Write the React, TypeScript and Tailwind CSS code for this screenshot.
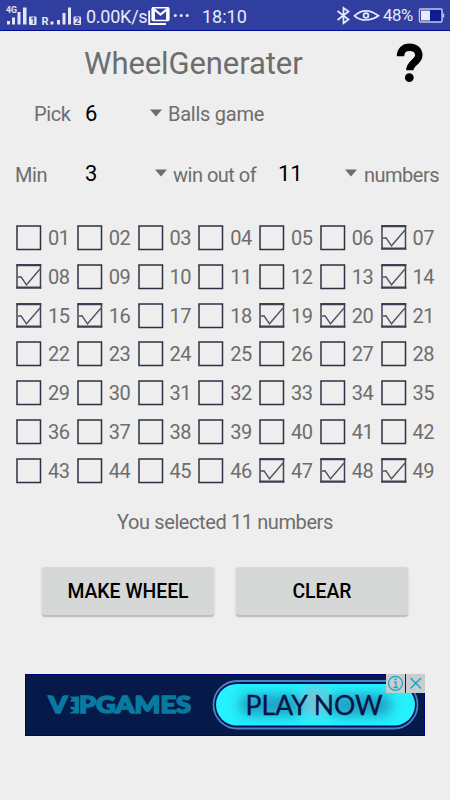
import { useState } from "react"

const NUMBERS = Array.from({ length: 49 }, (_, i) => i + 1)
const INITIAL = [7, 8, 14, 15, 16, 19, 20, 21, 47, 48, 49]

export default function App() {
  const [selected, setSelected] = useState<number[]>(INITIAL)

  const toggle = (n: number) => {
    setSelected((prev) => (prev.includes(n) ? prev.filter((x) => x !== n) : [...prev, n]))
  }

  return (
    <div className="flex h-[800px] w-[450px] flex-col overflow-hidden bg-[#eeeeee] font-['Roboto',sans-serif] text-[20px] tracking-[-0.4px] text-[#6d6d6d]">
      <StatusBar />

      <header className="flex h-[64px] items-center justify-between pl-[84px] pr-[26px]">
        <h1 className="text-[31px] leading-none tracking-[-0.1px]">WheelGenerater</h1>
        <HelpIcon />
      </header>

      <div className="flex h-[38px] items-center pl-[34px]">
        <span className="w-[51px]">Pick</span>
        <Spinner value="6" className="w-[77px]" />
        <span className="ml-[6px] tracking-[-0.25px]">Balls game</span>
      </div>

      <div className="mt-[22px] flex h-[38px] items-center pl-[15px]">
        <span className="mt-[1px] w-[70px]">Min</span>
        <Spinner value="3" className="w-[82px]" />
        <span className="ml-[6px] mt-[1px] w-[105px] tracking-[-0.5px]">win out of</span>
        <Spinner value="11" className="w-[79px]" />
        <span className="ml-[7px] mt-[1px] whitespace-nowrap tracking-[-0.5px]">numbers</span>
      </div>

      <div className="mt-[32px] grid auto-rows-[38.75px] grid-cols-[repeat(7,60.75px)] pl-[16px]">
        {NUMBERS.map((n) => (
          <NumberBox key={n} value={n} checked={selected.includes(n)} onToggle={() => toggle(n)} />
        ))}
      </div>

      <p className="mt-[12px] text-center leading-[28px]">You selected {selected.length} numbers</p>

      <div className="mt-[31px] flex gap-[22px] pl-[42px]">
        <ActionButton label="MAKE WHEEL" />
        <ActionButton label="CLEAR" onClick={() => setSelected([])} />
      </div>

      <AdBanner />
    </div>
  )
}

function StatusBar() {
  return (
    <div className="flex h-[31px] shrink-0 items-center border-b border-[#000c96] bg-[#303f9f] text-[18px] leading-none tracking-normal text-[#e8eaf8]">
      <svg width="86" height="30" viewBox="0 0 86 30" fill="#e4e6f6">
        <text x="6" y="13" fontSize="9.500" fontWeight="700" textLength="11" lengthAdjust="spacingAndGlyphs">4G</text>
        <path d="M7 21h3v3.500H7zM12 17.500h3v7h-3zM17.500 12h3v12.500h-3zM23 7.500h3.500v17H23z" />
        <rect x="29" y="16.500" width="7.500" height="8.500" rx="1" />
        <text x="30.500" y="24" fontSize="9" fontWeight="700" fill="#303f9f">1</text>
        <text x="41.500" y="24.500" fontSize="11" fontWeight="700">R</text>
        <path d="M50.500 21.500h3v3h-3zM57 20h3v4.500h-3zM62.500 13h3v11.500h-3zM68 7.500h3v17h-3z" />
        <rect x="73.500" y="16.500" width="7.500" height="8.500" rx="1" />
        <text x="74.700" y="24" fontSize="9" fontWeight="700" fill="#303f9f">2</text>
      </svg>
      <span className="mt-[3px] w-[62px] whitespace-nowrap text-[18px] tracking-[-0.25px]">0.00K/s</span>
      <svg width="43" height="30" viewBox="148 0 43 30" fill="none">
        <path d="M149.200 10.500V24H166" stroke="#fff" strokeWidth="1.800" />
        <rect x="152.200" y="7.800" width="16.600" height="12.700" rx="1" stroke="#fff" strokeWidth="1.600" />
        <path d="M153.800 20V9l6.700 5.500L167.200 9v11" stroke="#fff" strokeWidth="2.200" />
        <g fill="#e4e6f6">
          <circle cx="175.300" cy="15.500" r="1.500" />
          <circle cx="181.200" cy="15.500" r="1.500" />
          <circle cx="187.200" cy="15.500" r="1.500" />
        </g>
      </svg>
      <span className="ml-[11px] mt-[3px] w-[134px]">18:10</span>
      <svg width="45" height="30" viewBox="336 0 45 30" fill="none" stroke="#e8eaf8" strokeWidth="1.700">
        <path d="M337.500 11l11 8.500-5 3.700V8l5 3.500-11 8.500" />
        <path d="M354.500 15.800c4-3.800 7-5 11.500-5s8 1.600 12.500 5c-4.500 3-8 4.200-12.500 4.200s-8-1-11.500-4.200z" />
        <circle cx="366" cy="15.500" r="2.400" />
      </svg>
      <span className="ml-[2px] mt-[2px] w-[35px] text-[16.700px] tracking-[-0.4px]">48%</span>
      <svg width="27" height="30" viewBox="418 0 27 30">
        <rect x="419.500" y="9" width="22.500" height="13" rx="1" fill="#0c1c93" stroke="#c5c9e8" strokeWidth="1.500" />
        <rect x="421" y="10.500" width="9" height="10" fill="#e8eaf8" />
        <rect x="442.700" y="13.500" width="1.500" height="4" fill="#c5c9e8" />
      </svg>
    </div>
  )
}

function HelpIcon() {
  return (
    <svg width="28" height="40" viewBox="0 0 28 40" fill="none">
      <path d="M4.500 13.200C4.500 7.500 8 4.200 13.500 4.200s9.300 3.200 9.300 8.100c0 6.700-9 7.300-9 15" stroke="#000" strokeWidth="7.400" />
      <circle cx="13.300" cy="34.600" r="4.400" fill="#000" />
    </svg>
  )
}

function Spinner({ value, className }: { value: string; className: string }) {
  return (
    <button className={`flex items-center justify-between text-[22px] leading-none tracking-normal text-black ${className}`}>
      {value}
      <svg width="12" height="8" viewBox="0 0 12 8" className="-mt-[3px]">
        <path d="M0 .5h12l-6 7z" fill="#6d6d6d" />
      </svg>
    </button>
  )
}

function NumberBox({ value, checked, onToggle }: { value: number; checked: boolean; onToggle: () => void }) {
  return (
    <button onClick={onToggle} className="flex items-start gap-[6px]">
      <svg width="26" height="26" viewBox="0 0 26 26" fill="none" className="shrink-0">
        {checked ? (
          <>
            <path d="M1 .5v24M24.500 .5v24" stroke="#3d4352" strokeWidth="1.500" />
            <path d="M.3 1.200h25M.3 23.700h25" stroke="#3a4050" strokeWidth="2.300" />
            <path d="M2 13.200l3-.4 5.500 8L24 5" stroke="#53565f" strokeWidth="1.400" />
          </>
        ) : (
          <rect x="1" y="1" width="23.500" height="23.500" stroke="#2c3242" strokeWidth="1.500" />
        )}
      </svg>
      <span className="leading-[26px]">{String(value).padStart(2, "0")}</span>
    </button>
  )
}

function ActionButton({ label, onClick }: { label: string; onClick?: () => void }) {
  return (
    <button
      onClick={onClick}
      className="h-[48px] w-[172px] rounded-[3px] bg-[#d6d8d7] pt-px text-[19.4px] font-medium tracking-normal text-black shadow-[0_2px_1px_#bdbdbd,0_1px_3px_#cfcfcf]"
    >
      {label}
    </button>
  )
}

function AdBanner() {
  return (
    <div className="ml-[25px] mt-[59px] h-[62px] w-[400px] tracking-normal">
      <svg width="400" height="62" viewBox="0 0 400 62">
        <defs>
          <filter id="glow" x="-20%" y="-80%" width="140%" height="260%">
            <feGaussianBlur stdDeviation="6" />
          </filter>
          <clipPath id="pill">
            <rect x="191" y="10" width="199" height="41.500" rx="20.700" />
          </clipPath>
        </defs>
        <rect x=".5" y=".5" width="399" height="61" fill="#051a49" stroke="#000080" />

        <g fill="#087aa0" stroke="#087aa0" strokeWidth="1.500" fontFamily="Lato" fontWeight="900" fontSize="23">
          <text x="23.500" y="39.300" textLength="19" lengthAdjust="spacingAndGlyphs">V</text>
          <path d="M44.500 22.500H54v17H44l5-3-4-2 1-2 4 .5-1-3 1-2-5-.5 2-3z" stroke="none" />
          <text x="54" y="39.300" textLength="112" lengthAdjust="spacingAndGlyphs">PGAMES</text>
        </g>

        <rect x="188.500" y="7" width="204" height="47.500" rx="23.700" fill="#03105d" stroke="#4b83bd" strokeWidth="1.800" />
        <g clipPath="url(#pill)">
          <rect x="190" y="9" width="201" height="44" fill="#25f0fc" />
          <g filter="url(#glow)">
            <rect x="214" y="20" width="64" height="22" rx="10" fill="#1fa5c7" />
            <rect x="303" y="20" width="64" height="22" rx="10" fill="#1fa5c7" />
            <ellipse cx="290" cy="27" rx="12" ry="15" fill="#76c3d5" />
          </g>
        </g>
        <text
          x="220.500"
          y="41"
          textLength="137"
          fontFamily="Lato"
          fontSize="27"
          fill="#071444"
          stroke="#071444"
          strokeWidth=".3"
          lengthAdjust="spacingAndGlyphs"
        >
          PLAY NOW
        </text>

        <rect x="380" width="1" height="19" fill="#051a49" />
        <rect x="361" width="19" height="19" fill="#cccccc" />
        <rect x="381" width="19" height="19" fill="#cccccc" />
        <g fill="none" stroke="#12aace" strokeWidth="1.300">
          <circle cx="370.500" cy="9.300" r="7" />
          <path d="M369 8h2v5.500M368.500 13.500h4.500" />
          <path d="M385.500 4l10.500 10.500M396 4l-10.500 10.500" strokeWidth="1.500" />
        </g>
        <circle cx="370.500" cy="5.300" r="1" fill="#12aace" />
      </svg>
    </div>
  )
}
